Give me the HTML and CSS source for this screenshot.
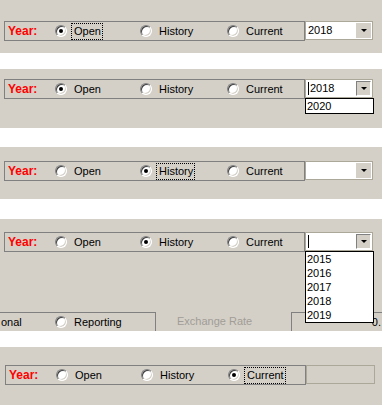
FILE: index.html
```html
<!DOCTYPE html>
<html lang="en">
  <head>
    <meta charset="UTF-8" />
    <title>Year selector states</title>
    <link rel="stylesheet" href="styles.css">
  </head>
  <body>
    <!-- state 1: Open selected, 2018 picked -->
    <div class="shot shot-1">
      <div class="row">
        <div class="group">
          <span class="year">Year:</span>
          <label class="opt opt-open"><span class="radio checked"></span><span class="cap focus">Open</span></label>
          <label class="opt opt-history"><span class="radio"></span><span class="cap">History</span></label>
          <label class="opt"><span class="radio"></span><span class="cap">Current</span></label>
        </div>
        <div class="combo">
          <span class="value">2018</span>
          <span class="drop"><span class="arrow"></span></span>
        </div>
      </div>
    </div>

    <!-- state 2: list open with one entry -->
    <div class="shot shot-2">
      <div class="row">
        <div class="group">
          <span class="year">Year:</span>
          <label class="opt opt-open"><span class="radio checked"></span><span class="cap">Open</span></label>
          <label class="opt opt-history"><span class="radio"></span><span class="cap">History</span></label>
          <label class="opt"><span class="radio"></span><span class="cap">Current</span></label>
        </div>
        <div class="combo">
          <span class="caret"></span><span class="value">2018</span>
          <span class="drop pressed"><span class="arrow"></span></span>
          <ul class="list">
            <li>2020</li>
          </ul>
        </div>
      </div>
    </div>

    <!-- state 3: History selected, empty combo -->
    <div class="shot shot-3">
      <div class="row">
        <div class="group">
          <span class="year">Year:</span>
          <label class="opt opt-open"><span class="radio"></span><span class="cap">Open</span></label>
          <label class="opt opt-history"><span class="radio checked"></span><span class="cap focus">History</span></label>
          <label class="opt"><span class="radio"></span><span class="cap">Current</span></label>
        </div>
        <div class="combo">
          <span class="value"></span>
          <span class="drop"><span class="arrow"></span></span>
        </div>
      </div>
    </div>

    <!-- state 4: History selected, full year list -->
    <div class="shot shot-4">
      <div class="row">
        <div class="group">
          <span class="year">Year:</span>
          <label class="opt opt-open"><span class="radio"></span><span class="cap">Open</span></label>
          <label class="opt opt-history"><span class="radio checked"></span><span class="cap">History</span></label>
          <label class="opt"><span class="radio"></span><span class="cap">Current</span></label>
        </div>
        <div class="combo">
          <span class="caret"></span><span class="value"></span>
          <span class="drop pressed"><span class="arrow"></span></span>
          <ul class="list">
            <li>2015</li>
            <li>2016</li>
            <li>2017</li>
            <li>2018</li>
            <li>2019</li>
          </ul>
        </div>
      </div>
      <div class="below">
        <div class="tabs">
          <span class="tab-text">onal</span>
          <label class="opt opt-report"><span class="radio"></span><span class="cap">Reporting</span></label>
        </div>
        <span class="muted">Exchange Rate</span>
        <div class="rate"><span>0.</span></div>
      </div>
    </div>

    <!-- state 5: Current selected, combo hidden -->
    <div class="shot shot-5">
      <div class="row">
        <div class="group">
          <span class="year">Year:</span>
          <label class="opt opt-open"><span class="radio"></span><span class="cap">Open</span></label>
          <label class="opt opt-history"><span class="radio"></span><span class="cap">History</span></label>
          <label class="opt"><span class="radio checked"></span><span class="cap focus">Current</span></label>
        </div>
        <div class="combo empty"></div>
      </div>
    </div>
  </body>
</html>
```

FILE: styles.css
```css
body {
  margin: 0;
  background: #ffffff;
  font-family: "Liberation Sans", Arial, sans-serif;
  font-size: 11px;
  color: #000;
}

.shot {
  background: #d4d0c8;
  overflow: hidden;
}

.shot-1 {
  height: 53px;
  padding-top: 21px;
  box-sizing: border-box;
}

.shot-2 {
  margin-top: 16px;
  height: 59px;
  padding-top: 10px;
  box-sizing: border-box;
}

.shot-3 {
  margin-top: 19px;
  height: 52px;
  padding-top: 14px;
  box-sizing: border-box;
}

.shot-4 {
  margin-top: 20px;
  height: 112px;
  padding-top: 13px;
  box-sizing: border-box;
}

.shot-5 {
  margin-top: 16px;
  height: 58px;
  padding-top: 18px;
  box-sizing: border-box;
}

.row {
  display: flex;
  align-items: flex-start;
  margin-left: 4px;
}

.shot-5 .row {
  margin-left: 5px;
}

.group {
  width: 301px;
  height: 20px;
  box-sizing: border-box;
  border: 1px solid #808080;
  display: flex;
  align-items: center;
}

.year {
  width: 50px;
  padding-left: 3px;
  box-sizing: border-box;
  color: #ff0000;
  font-weight: bold;
  font-size: 12px;
}

.opt {
  display: flex;
  align-items: center;
}

.opt-open {
  width: 85px;
}

.opt-history {
  width: 87px;
}

/* classic sunken radio */
.radio {
  position: relative;
  width: 12px;
  height: 12px;
  box-sizing: border-box;
  border-radius: 50%;
  background: #fff;
  border: 1px solid;
  border-color: #808080 #ffffff #ffffff #808080;
  box-shadow: inset 1px 1px 0 #404040, inset -1px -1px 0 #d4d0c8;
  margin-right: 4px;
  flex: none;
}

.radio.checked::after {
  content: "";
  position: absolute;
  left: 3px;
  top: 3px;
  width: 4px;
  height: 4px;
  border-radius: 50%;
  background: #000;
}

.cap {
  height: 17px;
  line-height: 15px;
  box-sizing: border-box;
  padding: 0 1px 0 2px;
  border: 1px dotted transparent;
  white-space: nowrap;
}

.cap.focus {
  border-color: #000;
}

.combo {
  position: relative;
  width: 68px;
  height: 19px;
  box-sizing: border-box;
  border: 1px solid #aca899;
  background: #fff;
  display: flex;
  align-items: center;
  padding-left: 2px;
}

.combo.empty {
  background: transparent;
  width: 69px;
}

.value {
  flex: 1;
  line-height: 15px;
}

.caret {
  width: 1px;
  height: 13px;
  background: #000;
  margin-right: 1px;
}

.drop {
  width: 15px;
  height: 15px;
  box-sizing: border-box;
  margin-right: 1px;
  background: #d4d0c8;
  display: flex;
  align-items: center;
  justify-content: center;
}

.drop.pressed {
  border: 1px solid;
  border-color: #808080 #ffffff #ffffff #808080;
}

.arrow {
  width: 0;
  height: 0;
  border-left: 3px solid transparent;
  border-right: 3px solid transparent;
  border-top: 3px solid #000;
}

.list {
  position: absolute;
  top: calc(100% + 1px);
  left: -1px;
  width: 69px;
  box-sizing: border-box;
  margin: 0;
  padding: 0;
  list-style: none;
  background: #fff;
  border: 1px solid #000;
  z-index: 2;
}

.list li {
  height: 14px;
  line-height: 14px;
  padding-left: 1px;
}

.below {
  margin-top: 60px;
  height: 19px;
  display: flex;
}

.tabs {
  width: 156px;
  box-sizing: border-box;
  border-top: 1px solid #808080;
  border-right: 1px solid #808080;
  display: flex;
  align-items: center;
}

.tab-text {
  width: 55px;
  padding-left: 1px;
  box-sizing: border-box;
}

.muted {
  margin-left: 21px;
  width: 114px;
  color: #a19d96;
  line-height: 19px;
}

.rate {
  flex: 1;
  border-top: 1px solid #808080;
  border-left: 1px solid #808080;
  display: flex;
  align-items: center;
  justify-content: flex-end;
}

.rate span {
  margin-right: 1px;
}
```
